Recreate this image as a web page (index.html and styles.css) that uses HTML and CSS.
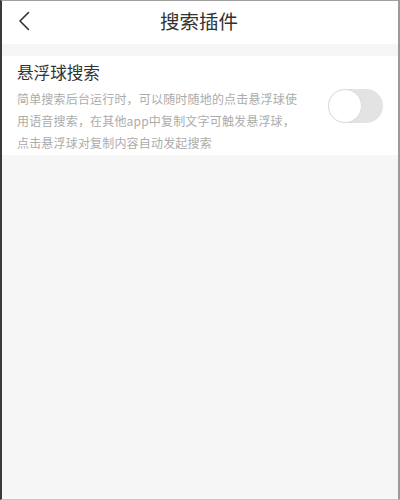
FILE: index.html
```html
<!DOCTYPE html>
<html lang="zh-CN">
<head>
<meta charset="utf-8">
<title>搜索插件</title>
<link rel="stylesheet" href="styles.css">
</head>
<body>
<div class="screen">
  <header class="topbar">
    <span class="back">
      <svg width="14" height="20" viewBox="0 0 14 20"><path d="M11.5 1.5 L3 10 L11.5 18.5" fill="none" stroke="#333" stroke-width="1.6" stroke-linecap="round" stroke-linejoin="round"/></svg>
    </span>
    <h1 class="title">搜索插件</h1>
  </header>
  <div class="gap"></div>
  <section class="card">
    <div class="text">
      <div class="card-title">悬浮球搜索</div>
      <p class="desc">简单搜索后台运行时，可以随时随地的点击悬浮球使<br>用语音搜索，在其他app中复制文字可触发悬浮球，<br>点击悬浮球对复制内容自动发起搜索</p>
    </div>
    <div class="switch"><span class="knob"></span></div>
  </section>
</div>
</body>
</html>
```
FILE: styles.css
```css
html, body {
  margin: 0;
  padding: 0;
}
body {
  font-family: "Noto Sans CJK SC", "Noto Sans", sans-serif;
  background: #f6f6f6;
}
.screen {
  box-sizing: border-box;
  height: 500px;
  width: 400px;
  background: #f6f6f6;
  border-left: 2px solid #3a3a3a;
  border-top: 1px solid #a0a0a0;
  border-right: 2px solid #9a9a9a;
  border-bottom: 1px solid #c8c8c8;
  display: flex;
  flex-direction: column;
}
.topbar {
  height: 43px;
  background: #fff;
  display: flex;
  align-items: center;
  justify-content: center;
  position: relative;
}
.back {
  position: absolute;
  left: 15px;
  top: 10px;
  display: flex;
}
.title {
  margin: 0;
  font-size: 19.5px;
  font-weight: 400;
  color: #333;
  line-height: 1;
  margin-top: -4px;
  margin-left: -2px;
}
.gap {
  height: 12px;
}
.card {
  background: #fff;
  height: 99px;
  display: flex;
  align-items: flex-start;
  justify-content: space-between;
  padding: 0 15px 0 15px;
}
.card-title {
  font-size: 16.6px;
  color: #333;
  line-height: 1;
  margin-top: 8px;
}
.desc {
  margin: 7px 0 0;
  font-size: 12px;
  letter-spacing: 0.18px;
  line-height: 22px;
  color: #acacac;
  white-space: nowrap;
}
.switch {
  margin-top: 33px;
  width: 55px;
  height: 34px;
  border-radius: 17px;
  background: #e3e3e3;
  position: relative;
  box-sizing: border-box;
}
.knob {
  position: absolute;
  left: 0;
  top: 0;
  width: 34px;
  height: 34px;
  box-sizing: border-box;
  border-radius: 50%;
  background: #fff;
  border: 1.5px solid #dcdcdc;
}
```
